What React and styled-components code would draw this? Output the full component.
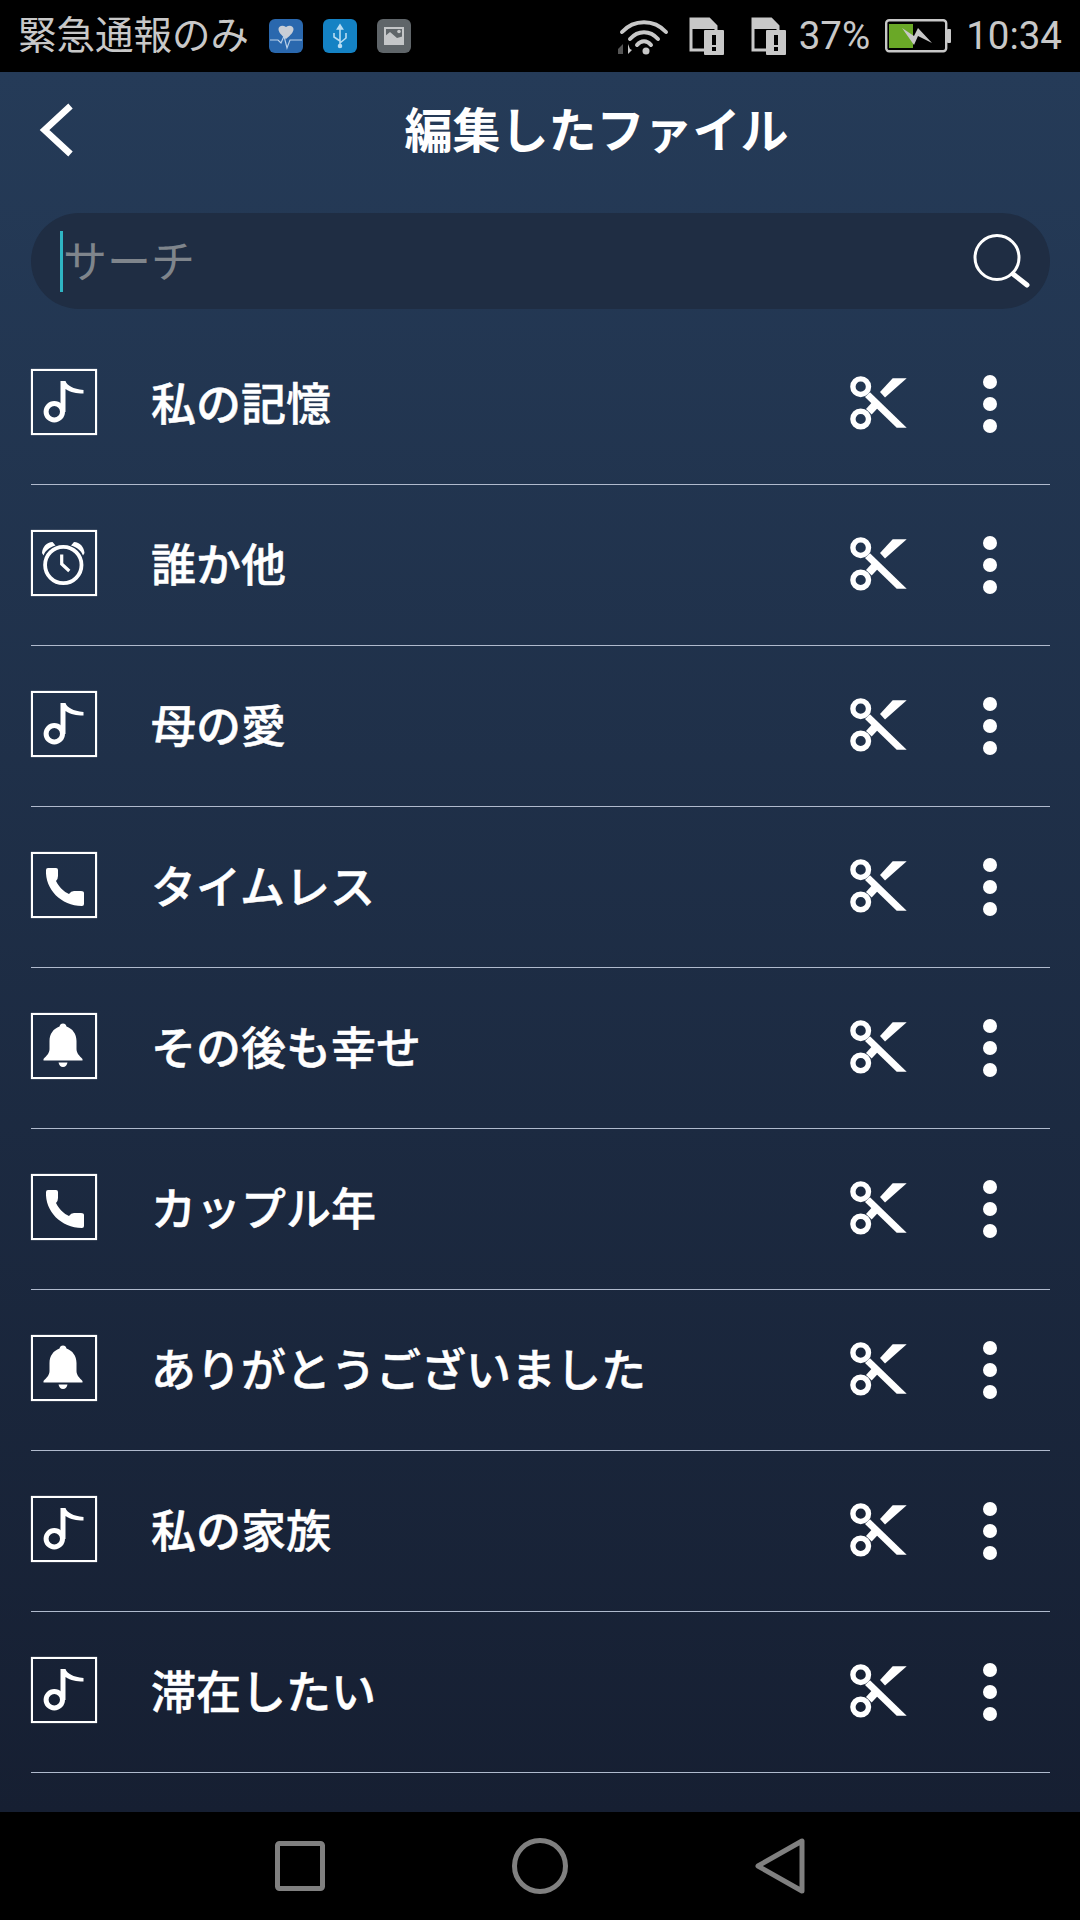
import React from "react";
import styled, { createGlobalStyle } from "styled-components";

const GlobalStyle = createGlobalStyle`
    html, body {
        margin: 0;
        padding: 0;
        background: #000000;
    }
    * {
        box-sizing: border-box;
    }
`;

const FONT = `"Noto Sans CJK JP", "Noto Sans", sans-serif`;

const rows = [
    { id: 1, icon: "note", name: "私の記憶" },
    { id: 2, icon: "alarm", name: "誰か他" },
    { id: 3, icon: "note", name: "母の愛" },
    { id: 4, icon: "phone", name: "タイムレス" },
    { id: 5, icon: "bell", name: "その後も幸せ" },
    { id: 6, icon: "phone", name: "カップル年" },
    { id: 7, icon: "bell", name: "ありがとうございました" },
    { id: 8, icon: "note", name: "私の家族" },
    { id: 9, icon: "note", name: "滞在したい" },
];

function TypeIcon({ type }) {
    return (
        <svg width="62" height="62" viewBox="2 2 62 62" fill="#ffffff">
            {type === "note" && (
                <>
                    <circle cx="23.3" cy="42.7" r="8.2" fill="none" stroke="#ffffff" strokeWidth="5" />
                    <path d="M29.5 43V12H34.5C36 16.5 42 20 52.5 21V24.5C45 24.5 40 23.5 34.500 20V43Z" />
                </>
            )}
            {type === "alarm" && (
                <>
                    <circle cx="32.3" cy="35" r="18.2" fill="none" stroke="#ffffff" strokeWidth="3.8" />
                    <path d="M11 23C11.500 17 15.500 12 21.500 12L24.500 15.500C18 17.500 14.500 20.500 12.500 25.500Z" />
                    <path d="M53.500 23C53 17 49 12 43 12L40 15.500C46.500 17.500 50 20.500 52 25.500Z" />
                    <path d="M30.700 24.500V34L38.300 41" fill="none" stroke="#ffffff" strokeWidth="3.200" />
                </>
            )}
            {type === "phone" && (
                <path d="M17 16H25Q27 16 27 18V24Q27 27 25 29C28 35 33 40 38 42Q40 39 43 39H50Q53 39 53 41V52Q53 54 51 54C30 54 14 37 15 18Q15 16 17 16Z" />
            )}
            {type === "bell" && (
                <>
                    <path d="M32 10.500C34 10.500 35 11.500 35.500 13.500C41.500 15.500 45.500 21 45.500 28V36C45.500 40 48.500 43 51.500 46V47.500H12.500V46C15.500 43 18.500 40 18.500 36V28C18.500 21 22.500 15.500 28.500 13.500C29 11.500 30 10.500 32 10.500Z" />
                    <path d="M27.500 49.500H36.500C36 52 34.500 54 32 54C29.500 54 28 52 27.500 49.500Z" />
                </>
            )}
        </svg>
    );
}

function Scissors() {
    return (
        <svg width="60" height="56" viewBox="0 0 60 56" fill="#ffffff">
            <circle cx="10.700" cy="10.700" r="7.800" fill="none" stroke="#ffffff" strokeWidth="5.400" />
            <circle cx="10.700" cy="43" r="7.800" fill="none" stroke="#ffffff" strokeWidth="5.400" />
            <path d="M56.700 2.300H42.700L30 16L35 21.500Z" />
            <path d="M20 16.300L15 21L46.700 51.700H56.700Z" />
            <path d="M16 33L21.700 38.500L31 28.500L25 23Z" />
        </svg>
    );
}

function Row({ icon, name }) {
    return (
        <ListRow>
            <TypeBox>
                <TypeIcon type={icon} />
            </TypeBox>
            <RowName>{name}</RowName>
            <ScissorsSlot>
                <Scissors />
            </ScissorsSlot>
            <Dots>
                <i />
                <i />
                <i />
            </Dots>
        </ListRow>
    );
}

function SimIcon() {
    return (
        <svg width="36" height="38" viewBox="0 0 36 38">
            <path d="M2 2H20L27 9V33H2Z" fill="none" stroke="#c8c8c8" strokeWidth="3" />
            <path d="M2 1H20L27 9V12H2Z" fill="#c8c8c8" />
            <rect x="15" y="13" width="20" height="25" rx="1" fill="#c8c8c8" />
            <rect x="23" y="18" width="4" height="10" fill="#000000" />
            <rect x="23" y="30" width="4" height="4" fill="#000000" />
        </svg>
    );
}

export default function App() {
    return (
        <Screen>
            <GlobalStyle />
            <StatusBar>
                <StatusLeft>
                    <StatusText>緊急通報のみ</StatusText>
                    <AppBadge color="#2a68ae">
                        <svg width="34" height="34" viewBox="0 0 34 34">
                            <path d="M17 20C12 16 9.500 13 9.500 10C9.500 7 13.500 5.500 17 8C20.500 5.500 24.500 7 24.500 10C24.500 13 22 16 17 20Z" fill="#c9ced6" />
                            <path d="M1 21H9L12 24L15 17L18 29L21 21H33" fill="none" stroke="#b9cfe8" strokeWidth="1.200" />
                        </svg>
                    </AppBadge>
                    <AppBadge color="#1482c4">
                        <svg width="34" height="34" viewBox="0 0 34 34" fill="none" stroke="#b7dcf2" strokeWidth="1.600">
                            <path d="M17 8V28M11 14V18L17 22M23 14V19L17 24" />
                            <path d="M17 6L14.500 10H19.500Z" fill="#b7dcf2" />
                            <circle cx="17" cy="27" r="1.500" fill="#b7dcf2" />
                        </svg>
                    </AppBadge>
                    <AppBadge color="#5f6569">
                        <svg width="34" height="34" viewBox="0 0 34 34">
                            <rect x="7" y="8" width="20" height="18" fill="#c4c6c8" />
                            <rect x="9" y="10" width="16" height="9" fill="#5f6569" />
                            <path d="M7 18L13 13L20 19L27 17V26H7Z" fill="#c4c6c8" />
                            <circle cx="22" cy="12.500" r="1.800" fill="#c4c6c8" />
                        </svg>
                    </AppBadge>
                </StatusLeft>
                <StatusRight>
                    <StatusSlot>
                        <svg width="54" height="38" viewBox="0 0 54 38" fill="none" stroke="#c8c8c8" strokeWidth="4">
                            <path d="M5 15C17 2 37 2 49 15" strokeLinecap="round" />
                            <path d="M13 22C21 13 33 13 41 22" strokeLinecap="round" />
                            <path d="M20 28C24 23 30 23 34 28" strokeLinecap="round" />
                            <circle cx="29" cy="34" r="3.500" fill="#c8c8c8" stroke="none" />
                            <path d="M1 37V32L6 27V37Z" fill="#555555" stroke="none" />
                            <path d="M11 27V37L15 33L13 32Z" fill="#c8c8c8" stroke="none" />
                        </svg>
                    </StatusSlot>
                    <StatusSlot $gap={18}>
                        <SimIcon />
                    </StatusSlot>
                    <StatusSlot $gap={26}>
                        <SimIcon />
                    </StatusSlot>
                    <StatusSlot $gap={12}>
                        <StatusText>37%</StatusText>
                    </StatusSlot>
                    <StatusSlot $gap={15}>
                        <svg width="66" height="34" viewBox="0 0 66 34">
                            <rect x="1.200" y="1.200" width="60" height="31" rx="3" fill="none" stroke="#c8c8c8" strokeWidth="2.400" />
                            <rect x="4" y="5" width="24" height="24" fill="#6aa827" />
                            <rect x="62" y="10" width="4" height="14" rx="1" fill="#c8c8c8" />
                            <path d="M17 9L29 17L33 9L47 24L33 17L29 26Z" fill="#c8c8c8" />
                        </svg>
                    </StatusSlot>
                    <StatusSlot $gap={15}>
                        <StatusText>10:34</StatusText>
                    </StatusSlot>
                </StatusRight>
            </StatusBar>

            <Main>
                <Header>
                    <BackButton>
                        <svg width="34" height="54" viewBox="0 0 34 54" fill="none" stroke="#ffffff" strokeWidth="6.500">
                            <path d="M31.500 3L5.500 27L31.500 51" />
                        </svg>
                    </BackButton>
                    <Title>編集したファイル</Title>
                </Header>

                <SearchBar>
                    <Caret />
                    <Placeholder>サーチ</Placeholder>
                    <svg width="58" height="56" viewBox="0 0 58 56" fill="none" stroke="#ffffff">
                        <circle cx="25" cy="24.500" r="22" strokeWidth="3" />
                        <path d="M41 41L55 52" strokeWidth="5" strokeLinecap="round" />
                    </svg>
                </SearchBar>

                <List>
                    {rows.map((r) => (
                        <Row key={r.id} icon={r.icon} name={r.name} />
                    ))}
                </List>
            </Main>

            <NavBar>
                <svg width="50" height="50" viewBox="0 0 50 50" fill="none" stroke="#808080" strokeWidth="5">
                    <rect x="2.500" y="2.500" width="45" height="45" rx="2" />
                </svg>
                <svg width="56" height="56" viewBox="0 0 56 56" fill="none" stroke="#808080" strokeWidth="5">
                    <circle cx="28" cy="28" r="25.500" />
                </svg>
                <svg width="50" height="56" viewBox="0 0 50 56" fill="none" stroke="#808080" strokeWidth="5" strokeLinejoin="round">
                    <path d="M47 3V53L3 28Z" />
                </svg>
            </NavBar>
        </Screen>
    );
}

const Screen = styled.div`
    width: 1080px;
    height: 1920px;
    display: flex;
    flex-direction: column;
    overflow: hidden;
    font-family: ${FONT};
    background: #000000;
`;

const StatusBar = styled.div`
    height: 72px;
    flex-shrink: 0;
    display: flex;
    align-items: center;
    justify-content: space-between;
    padding: 0 18px 0 18px;
    background: #000000;
`;

const StatusLeft = styled.div`
    display: flex;
    align-items: center;
    gap: 20px;
`;

const StatusRight = styled.div`
    display: flex;
    align-items: center;
`;

const StatusSlot = styled.div`
    display: flex;
    align-items: center;
    margin-left: ${(props) => props.$gap || 0}px;
`;

const StatusText = styled.span`
    font-family: Roboto, ${FONT};
    font-size: 38.5px;
    line-height: 44px;
    color: #c8c8c8;
`;

const AppBadge = styled.div`
    width: 34px;
    height: 34px;
    border-radius: 6px;
    overflow: hidden;
    background: ${(props) => props.color};
    svg {
        display: block;
    }
`;

const Main = styled.div`
    flex: 1;
    min-height: 0;
    display: flex;
    flex-direction: column;
    padding: 0 30px 0 31px;
    background: linear-gradient(180deg, #253b58 0%, #161f32 100%);
`;

const Header = styled.div`
    position: relative;
    height: 141px;
    flex-shrink: 0;
    display: flex;
    align-items: center;
    justify-content: center;
    padding: 0 0 32px 112px;
`;

const BackButton = styled.div`
    position: absolute;
    left: 8px;
    top: 31px;
    line-height: 0;
`;

const Title = styled.h1`
    margin: 0;
    font-size: 48px;
    font-weight: 700;
    line-height: 60px;
    color: #ffffff;
`;

const SearchBar = styled.div`
    height: 96px;
    flex-shrink: 0;
    display: flex;
    align-items: center;
    padding: 0 20px 0 29px;
    border-radius: 48px;
    background: #1f2d43;
`;

const Caret = styled.div`
    width: 3px;
    height: 61px;
    background: #2fb5c4;
`;

const Placeholder = styled.span`
    flex: 1;
    padding-bottom: 4px;
    font-size: 44px;
    line-height: 60px;
    color: #7f858c;
`;

const List = styled.div`
    display: flex;
    flex-direction: column;
    margin-top: 15px;
`;

const ListRow = styled.div`
    height: 161px;
    flex-shrink: 0;
    display: flex;
    align-items: center;
    padding-bottom: 1px;
    border-bottom: 1px solid #b0bacd;
`;

const TypeBox = styled.div`
    width: 66px;
    height: 66px;
    flex-shrink: 0;
    margin-bottom: 3px;
    border: 2px solid #ffffff;
    box-shadow: 0 0 1px rgba(255, 255, 255, 0.7);
    svg {
        display: block;
    }
`;

const RowName = styled.div`
    flex: 1;
    margin: 0 0 4px 54px;
    font-size: 45px;
    font-weight: 500;
    line-height: 60px;
    color: #ffffff;
    -webkit-text-stroke: 0.5px #ffffff;
`;

const ScissorsSlot = styled.div`
    width: 60px;
    line-height: 0;
`;

const Dots = styled.div`
    width: 15px;
    margin: 0 52px 0 73px;
    display: flex;
    flex-direction: column;
    gap: 8px;
    i {
        display: block;
        width: 14px;
        height: 14px;
        border-radius: 50%;
        background: #ffffff;
    }
`;

const NavBar = styled.div`
    height: 108px;
    flex-shrink: 0;
    display: flex;
    align-items: center;
    justify-content: center;
    gap: 187px;
    background: #000000;
`;
